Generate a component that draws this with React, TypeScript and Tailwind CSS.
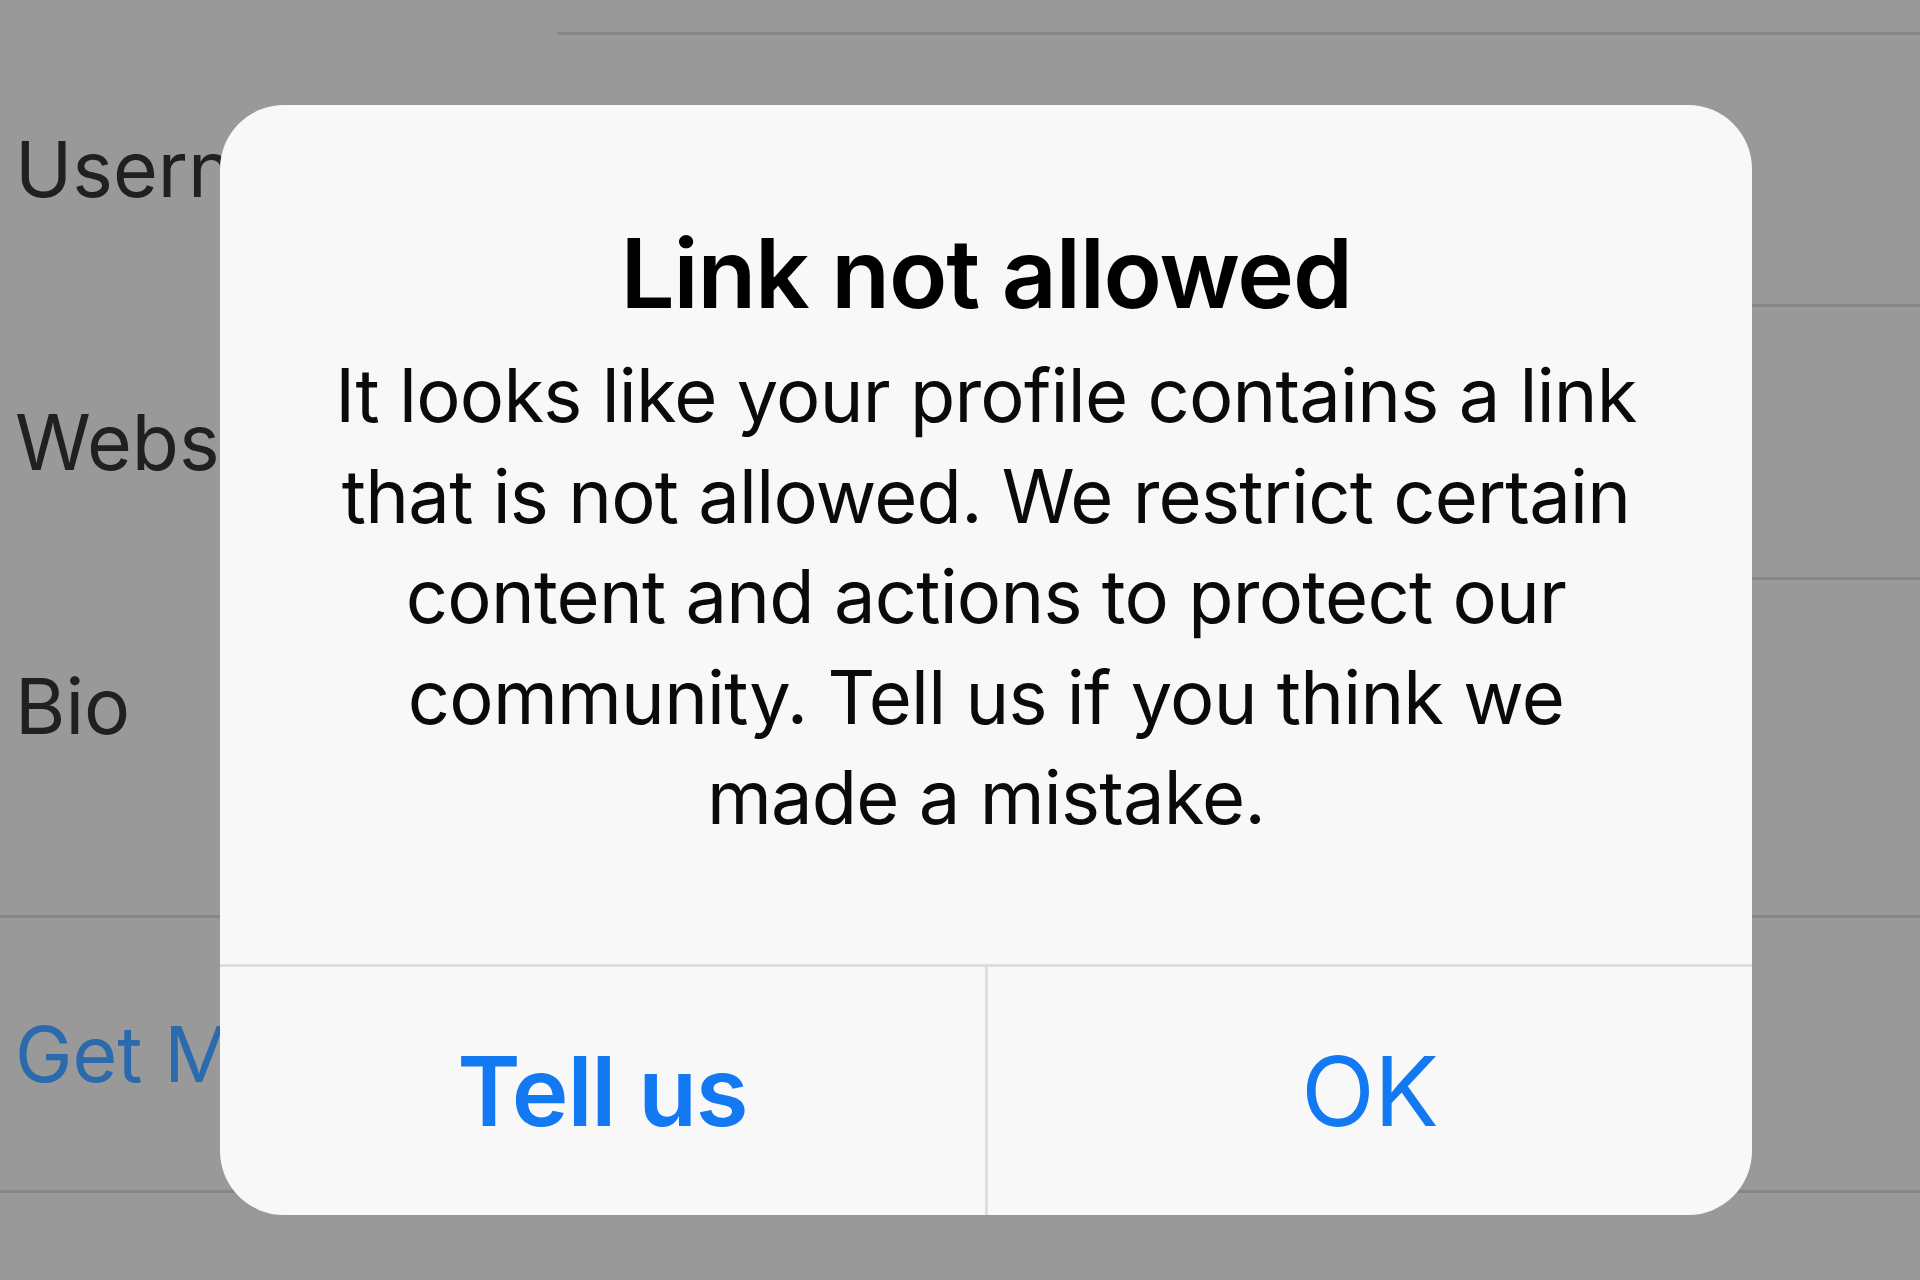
import React from "react";

const font = { fontFamily: "Inter, 'Noto Sans', sans-serif" };

export default function App() {
  return (
    <div className="relative w-[1920px] h-[1280px] overflow-hidden bg-[#999999]" style={font}>
      {/* background settings list */}
      <div className="flex flex-col">
        <div className="h-[32px]" />
        <div className="h-[3px] ml-[557px] bg-[#868686]" />
        <div className="h-[269px] flex items-center pl-[15px] overflow-hidden">
          <span className="text-[77px] leading-none text-[#202020] whitespace-nowrap">Username</span>
        </div>
        <div className="h-[3px] ml-[557px] bg-[#868686]" />
        <div className="h-[270px] flex items-center pl-[15px] overflow-hidden">
          <span className="text-[77px] leading-none text-[#202020] whitespace-nowrap">Website</span>
        </div>
        <div className="h-[3px] ml-[557px] bg-[#868686]" />
        <div className="h-[335px] flex items-start pl-[15px] pt-[88px]">
          <span className="text-[77px] leading-none text-[#202020]">Bio</span>
        </div>
        <div className="h-[3px] bg-[#868686]" />
        <div className="h-[272px] flex items-center pl-[15px] overflow-hidden">
          <span className="text-[77px] leading-none text-[#2b6aac] whitespace-nowrap">Get More</span>
        </div>
        <div className="h-[3px] bg-[#868686]" />
      </div>

      {/* alert dialog */}
      <div className="absolute left-[220px] top-[105px] w-[1532px] h-[1110px] rounded-[64px] bg-[#f8f8f8] flex flex-col overflow-hidden">
        <div className="h-[859px] flex flex-col items-center pt-[111px]">
          <div className="text-[96px] leading-[115px] font-semibold text-black tracking-[-1.2px]">
            Link not allowed
          </div>
          <div className="mt-[14px] text-[74px] leading-[100.5px] text-[#0a0a0a] text-center tracking-[-0.75px]">
            It looks like your profile contains a link
            <br />
            that is not allowed. We restrict certain
            <br />
            content and actions to protect our
            <br />
            community. Tell us if you think we
            <br />
            made a mistake.
          </div>
        </div>
        <div className="h-[3px] bg-[#dddddd]" />
        <div className="flex-1 flex">
          <div className="flex-1 flex items-center justify-center text-[96px] font-semibold text-[#1279f3] tracking-[-1.2px]">
            Tell us
          </div>
          <div className="w-[3px] bg-[#dddddd]" />
          <div className="flex-1 flex items-center justify-center text-[96px] text-[#1279f3] tracking-[-0.5px]">
            OK
          </div>
        </div>
      </div>
    </div>
  );
}
